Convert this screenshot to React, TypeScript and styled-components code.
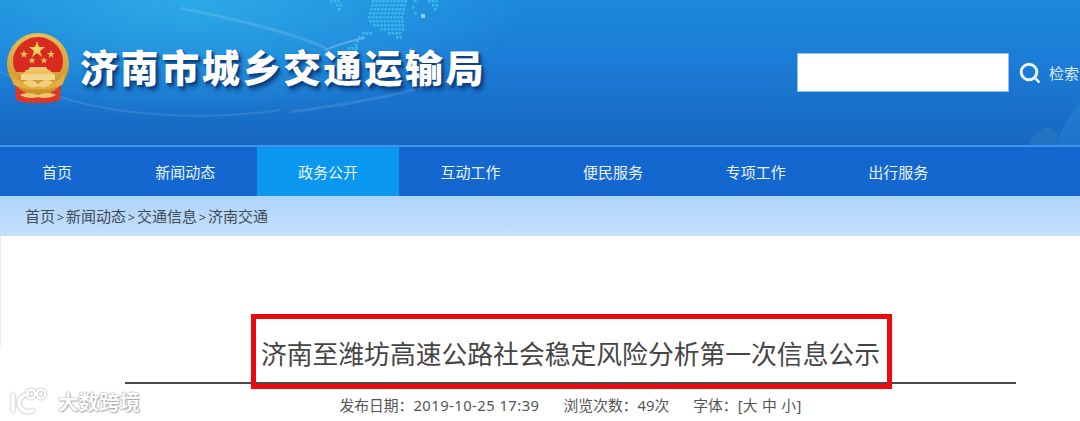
import styled, { createGlobalStyle } from 'styled-components'

const GlobalStyle = createGlobalStyle`
  html, body {
    margin: 0;
    padding: 0;
    background: #fff;
    overflow: hidden;
  }
  body {
    font-family: "Noto Sans", "Noto Sans CJK SC", sans-serif;
  }
`

const Page = styled.div`
  width: 1080px;
  height: 421px;
  overflow: hidden;
  position: relative;
`

const Header = styled.header`
  position: relative;
  height: 145px;
  overflow: hidden;
  display: flex;
  align-items: flex-start;
  justify-content: space-between;
  background:
    radial-gradient(ellipse 340px 120px at 190px 0px, rgba(48, 178, 232, 0.8), rgba(48, 178, 232, 0) 100%),
    linear-gradient(180deg, #1c88dd 0%, #1b7bd6 45%, #1767bf 100%);
`

const Decoration = styled.svg`
  position: absolute;
  left: 0;
  top: 0;
`

const Brand = styled.div`
  position: relative;
  display: flex;
  align-items: flex-start;
  gap: 10px;
  padding: 33px 0 0 6px;
`

const SiteName = styled.h1`
  margin: 0;
  font-family: "Noto Sans CJK SC", sans-serif;
  font-size: 38px;
  line-height: 65px;
  font-weight: 900;
  letter-spacing: 2.6px;
  white-space: nowrap;
  color: #fff;
  text-shadow: 2px 2px 1px #0d4286, 3px 4px 4px rgba(8, 50, 110, 0.75);
`

const SearchBar = styled.form`
  position: relative;
  display: flex;
  align-items: center;
  flex: none;
  width: 290px;
  margin: 53px -7px 0 0;
`

const SearchInput = styled.input`
  box-sizing: border-box;
  width: 212px;
  height: 39px;
  border: 1px solid #8fc0ee;
  background: #fff;
  outline: none;
`

const SearchIcon = styled.svg`
  margin-left: 10px;
  flex: none;
`

const SearchLabel = styled.span`
  margin-left: 8px;
  font-size: 15px;
  color: #dcecfb;
  white-space: nowrap;
`

const Nav = styled.nav`
  display: flex;
  height: 49px;
  border-top: 2px solid #3d92ee;
  background: #1467cf;
`

const NavItem = styled.a<{ $active?: boolean; $first?: boolean }>`
  flex: none;
  width: ${p => (p.$first ? '114px' : '142.6px')};
  display: flex;
  align-items: center;
  justify-content: center;
  font-size: 15px;
  color: #eaf3fc;
  background: ${p => (p.$active ? '#0997ef' : 'transparent')};
`

const Breadcrumb = styled.div`
  height: 40px;
  box-sizing: border-box;
  padding: 0 0 2px 25px;
  display: flex;
  align-items: center;
  font-size: 15px;
  color: #3f4a55;
  background: linear-gradient(180deg, #aed4fa 0%, #c4e0fb 100%);
`

const Crumb = styled.span``

const CrumbSep = styled.span`
  display: inline-block;
  width: 11px;
  text-align: center;
  font-size: 13px;
`

const EdgeLine = styled.div`
  position: absolute;
  left: 0;
  top: 236px;
  width: 1px;
  height: 110px;
  background: #ececec;
`

const Content = styled.main`
  width: 891px;
  margin-left: 125px;
  padding-top: 98px;
  text-align: center;
`

const TitleBlock = styled.div`
  position: relative;
  height: 48px;
  border-bottom: 2px solid #4a4a4a;
`

const Title = styled.h2`
  margin: 0;
  font-size: 25.8px;
  line-height: 40px;
  font-weight: 400;
  color: #454545;
  white-space: nowrap;
`

const Highlight = styled.div`
  position: absolute;
  left: 126px;
  top: -20px;
  width: 641px;
  height: 75px;
  box-sizing: border-box;
  border: 5px solid #ea0a10;
`

const Meta = styled.div`
  display: flex;
  justify-content: center;
  gap: 24px;
  margin-top: 11px;
  font-size: 14.8px;
  line-height: 20px;
  color: #555;
  white-space: nowrap;
`

const MetaItem = styled.span``

const MetaValue = styled.span<{ $spacing: number }>`
  letter-spacing: ${p => p.$spacing}px;
`

const Watermark = styled.div`
  position: absolute;
  left: 9px;
  top: 386px;
  display: flex;
  align-items: center;
  gap: 9px;
`

const WatermarkText = styled.span`
  font-family: "Noto Sans CJK SC", sans-serif;
  font-size: 20.5px;
  font-weight: 700;
  color: #fff;
  text-shadow: 0 0 2px #999, 0 0 1px #aaa, 1px 1px 1px #bbb;
`

// bright pixel map at the top of the banner: [row y, start x, dots]
const mapRows: [number, number, number][] = [
  [0, 372, 10], [4, 371, 10], [8, 370, 10], [12, 369, 10], [16, 368, 10],
  [20, 369, 10], [24, 373, 9], [28, 380, 7], [32, 388, 4], [36, 396, 2],
  [0, 414, 1], [6, 412, 1], [12, 414, 1],
  [0, 330, 3], [4, 336, 2], [8, 338, 1],
  [0, 428, 3], [4, 432, 2], [8, 434, 1],
  [32, 362, 3], [36, 358, 2], [40, 356, 1], [44, 355, 1], [47, 348, 3], [51, 345, 3],
]

const MapDots = () => (
  <g fill="#3cc0ee" opacity="0.8">
    {mapRows.flatMap(([y, x, n]) =>
      Array.from({ length: n }, (_, i) => (
        <rect key={`${y}-${x}-${i}`} x={x + i * 3.6} y={y} width="2.600" height="2.600" />
      )),
    )}
    <rect x="421" y="14" width="4" height="4" fill="#9fe2f8" />
  </g>
)

const Emblem = () => (
  <svg width="64" height="71" viewBox="0 0 64 71">
    <defs>
      <linearGradient id="gold" x1="0" y1="0" x2="0" y2="1">
        <stop offset="0" stopColor="#e8bd58" />
        <stop offset="1" stopColor="#c98f25" />
      </linearGradient>
    </defs>
    <path d="M9 50h46l-1 17-6 2-6 1H22l-6-1-6-2z" fill="#d8372a" />
    <circle cx="32" cy="31" r="31" fill="url(#gold)" />
    <path d="M32 4c13 0 25 11 25 24 0 4-1 8-3 11H10C8 36 7 32 7 28 7 15 19 4 32 4z" fill="#d92a22" />
    <path d="M31 8l2 6h6l-5 4 2 6-5-4-5 4 2-6-5-4h6z" fill="#f4d35a" />
    <path d="M18 17l1 3h3l-2.500 2 1 3-2.500-2-2.500 2 1-3-2.500-2h3zM45 17l1 3h3l-2.500 2 1 3-2.500-2-2.500 2 1-3-2.500-2h3zM26 24l1 2.500h2.500l-2 1.600.8 2.500-2.300-1.500-2.300 1.500.8-2.500-2-1.600H25zM38 24l1 2.500h2.500l-2 1.600.8 2.500-2.300-1.500-2.300 1.500.8-2.500-2-1.600H37z" fill="#f0c84e" />
    <path d="M24 34h16l2 3H22z" fill="#f0c878" />
    <path d="M20 37h24l3 4H17z" fill="#eec15c" />
    <rect x="15" y="41" width="34" height="6" fill="#f2d68c" />
    <path d="M5 39c4 9 14 13 27 12 13 1 23-3 27-12l-2 12c-6 4-16 6-25 5-9 1-19-1-25-5z" fill="#e4ad3e" />
    <path d="M17 49c5-3 10-3 15 2 5-5 10-5 15-2-4 5-10 7-15 4-5 3-11 1-15-4z" fill="#f1cd7c" />
    <path d="M14 62c6-3 12-2 18 0 6-2 12-3 18 0-5 3-12 4-18 2-6 2-13 1-18-2z" fill="#efc56b" />
  </svg>
)

const WatermarkLogo = () => (
  <svg width="40" height="28" viewBox="0 0 40 28" fill="none" stroke="#fff" strokeWidth="2.400" style={{ filter: 'drop-shadow(0 0 1px #999)' }}>
    <path d="M4 6v19" strokeWidth="3.600" />
    <path d="M20 7C11 8 8 15 11 20c3 5 9 6 14 3" strokeWidth="3.600" />
    <circle cx="22" cy="7" r="4.200" />
    <circle cx="32" cy="7" r="4.200" />
  </svg>
)

const navItems = ['首页', '新闻动态', '政务公开', '互动工作', '便民服务', '专项工作', '出行服务']
const crumbs = ['首页', '新闻动态', '交通信息', '济南交通']

const App = () => (
  <Page>
    <GlobalStyle />
    <Header>
      <Decoration width="1080" height="145" viewBox="0 0 1080 145">
        <MapDots />
        <g fill="none" stroke="#fff">
          <path d="M180 8C240 20 290 32 326 48" opacity="0.12" strokeWidth="3" />
          <path d="M325 50c15-6 28-10 40-12" opacity="0.25" strokeWidth="2" />
          <path d="M0 72c20 10 40 20 70 28 50 14 130 22 210 10" opacity="0.1" strokeWidth="2" />
          <path d="M290 112c60-8 120-18 170-36" opacity="0.1" strokeWidth="3" />
        </g>
        <path d="M1028 145c4-8 10-16 18-17 6-1 10 2 12 6l-2 11z" fill="#2f86c4" opacity="0.4" />
        <path d="M1056 145c5-16 13-30 24-44v44z" fill="#2a82d8" opacity="0.45" />
      </Decoration>
      <Brand>
        <Emblem />
        <SiteName>济南市城乡交通运输局</SiteName>
      </Brand>
      <SearchBar onSubmit={e => e.preventDefault()}>
        <SearchInput />
        <SearchIcon width="22" height="22" viewBox="0 0 22 22" fill="none" stroke="#e6f2fc" strokeWidth="3">
          <circle cx="10" cy="10" r="7.800" />
          <path d="M15.500 15.500l5 5" strokeWidth="2.500" />
        </SearchIcon>
        <SearchLabel>检索</SearchLabel>
      </SearchBar>
    </Header>
    <Nav>
      {navItems.map((item, i) => (
        <NavItem key={item} $first={i === 0} $active={i === 2}>{item}</NavItem>
      ))}
    </Nav>
    <Breadcrumb>
      {crumbs.map((crumb, i) => (
        <Crumb key={crumb}>
          {i > 0 && <CrumbSep>&gt;</CrumbSep>}
          {crumb}
        </Crumb>
      ))}
    </Breadcrumb>
    <EdgeLine />
    <Content>
      <TitleBlock>
        <Title>济南至潍坊高速公路社会稳定风险分析第一次信息公示</Title>
        <Highlight />
      </TitleBlock>
      <Meta>
        <MetaItem>发布日期：<MetaValue $spacing={0.45}>2019-10-25 17:39</MetaValue></MetaItem>
        <MetaItem>浏览次数：49次</MetaItem>
        <MetaItem>字体：<MetaValue $spacing={0.3}>[大 中 小]</MetaValue></MetaItem>
      </Meta>
    </Content>
    <Watermark>
      <WatermarkLogo />
      <WatermarkText>大数跨境</WatermarkText>
    </Watermark>
  </Page>
)

export default App
